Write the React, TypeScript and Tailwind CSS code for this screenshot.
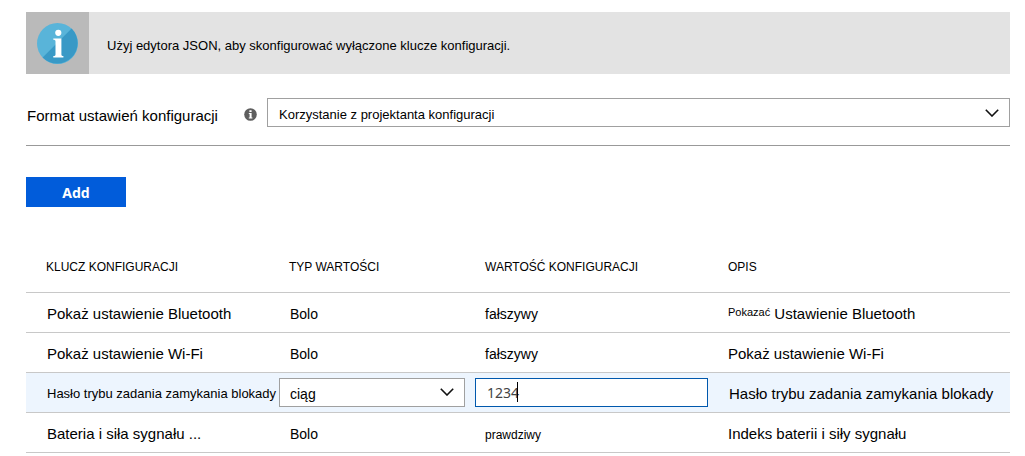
import { useState } from "react";
import type { ReactNode } from "react";

type Row = {
  key: string;
  type: string;
  value: string;
  description: ReactNode;
  editing?: boolean;
  small?: boolean;
};

const rows: Row[] = [
  {
    key: "Pokaż ustawienie Bluetooth",
    type: "Bolo",
    value: "fałszywy",
    description: (
      <>
        <span className="align-[3px] text-[11px]">Pokazać</span> Ustawienie Bluetooth
      </>
    ),
  },
  { key: "Pokaż ustawienie Wi-Fi", type: "Bolo", value: "fałszywy", description: "Pokaż ustawienie Wi-Fi" },
  {
    key: "Hasło trybu zadania zamykania blokady",
    type: "ciąg",
    value: "1234",
    description: "Hasło trybu zadania zamykania blokady",
    editing: true,
  },
  {
    key: "Bateria i siła sygnału ...",
    type: "Bolo",
    value: "prawdziwy",
    description: "Indeks baterii i siły sygnału",
    small: true,
  },
];

function Chevron() {
  return (
    <svg
      viewBox="0 0 14 8"
      className="pointer-events-none absolute top-1/2 right-[11px] h-2 w-[14px] -translate-y-1/2"
      fill="none"
      stroke="#111"
      strokeWidth="1.6"
      aria-hidden="true"
    >
      <path d="M0.8 0.8 L7 7 L13.2 0.8" />
    </svg>
  );
}

function InfoBadge() {
  return (
    <svg viewBox="0 0 41 41" className="h-[41px] w-[41px]" aria-hidden="true">
      <circle cx="20.5" cy="20.5" r="20.5" fill="#59b4d9" />
      <path d="M34.6 5.6 A20.5 20.5 0 1 1 5.6 34.6 Z" fill="#3999c6" />
      <circle cx="21.3" cy="9.8" r="3.1" fill="#fff" />
      <path
        d="M16.3 15.6 H24.4 V31.6 C24.4 32.8 25.2 33 26.4 33.1 V34.4 H16.3 V33.1 C17.8 33 18.5 32.8 18.5 31.6 V18.4 C18.5 17.2 17.8 16.9 16.3 16.8 Z"
        fill="#fff"
      />
    </svg>
  );
}

function InfoDot() {
  return (
    <svg viewBox="0 0 13 13" className="mt-1 h-[13px] w-[13px] shrink-0" aria-hidden="true">
      <circle cx="6.5" cy="6.5" r="6.3" fill="#5e5e5e" />
      <path d="M5.4 2.3 H7.6 V4.1 H5.4 Z M4.8 5.1 H7.6 V9.4 H8.4 V10.4 H4.8 V9.4 H5.6 V6.1 H4.8 Z" fill="#fff" />
    </svg>
  );
}

export default function App() {
  const [password, setPassword] = useState("1234");

  return (
    <main className="bg-white pt-3 pr-[15px] pl-[26px] font-['Liberation_Sans',Arial,sans-serif] text-black">
      <div className="flex bg-[#e3e3e3]">
        <div className="flex h-[62px] w-[63px] shrink-0 items-center justify-center bg-[#bababa]">
          <InfoBadge />
        </div>
        <p className="self-center pt-1.5 pl-[18px] text-[13px] leading-5">
          Użyj edytora JSON, aby skonfigurować wyłączone klucze konfiguracji.
        </p>
      </div>

      <div className="mt-6 flex items-center border-b border-[#999] pb-[18px]">
        <label htmlFor="format" className="w-[218px] shrink-0 pt-1.5 pl-px text-[15px] leading-5">
          Format ustawień konfiguracji
        </label>
        <InfoDot />
        <div className="relative ml-[10px] flex-1">
          <select
            id="format"
            className="block h-[29px] w-full appearance-none rounded-none border border-[#a0a0a0] bg-white px-[11px] pt-1 text-[13px]"
          >
            <option>Korzystanie z projektanta konfiguracji</option>
          </select>
          <Chevron />
        </div>
      </div>

      <button
        type="button"
        className="mt-[31px] h-[30px] w-[100px] bg-[#015cda] pt-0.5 font-['Noto_Sans',sans-serif] text-sm font-bold text-white"
      >
        Add
      </button>

      <table className="mt-9 w-full table-fixed border-collapse text-left">
        <colgroup>
          <col className="w-[253px]" />
          <col className="w-[196px]" />
          <col className="w-[243px]" />
          <col />
        </colgroup>
        <thead>
          <tr className="h-[49px] border-b border-[#c8c8c8] text-[12px]">
            <th className="pl-5 font-normal">KLUCZ KONFIGURACJI</th>
            <th className="pl-[10px] font-normal">TYP WARTOŚCI</th>
            <th className="pl-[10px] font-normal">WARTOŚĆ KONFIGURACJI</th>
            <th className="pl-[10px] font-normal">OPIS</th>
          </tr>
        </thead>
        <tbody>
          {rows.map((row) =>
            row.editing ? (
              <tr key={row.key} className="h-10 border-b border-[#c8c8c8] bg-[#edf5fe]">
                <td className="pt-1 pl-[21px] text-[13px] whitespace-nowrap">{row.key}</td>
                <td className="pr-[10px]">
                  <div className="relative">
                    <select
                      aria-label="Typ wartości"
                      className="block h-[29px] w-full appearance-none rounded-none border border-[#a0a0a0] bg-white px-[10px] pt-1 text-[14px]"
                    >
                      <option>{row.type}</option>
                    </select>
                    <Chevron />
                  </div>
                </td>
                <td className="pr-[10px]">
                  <div className="relative">
                    <input
                      type="text"
                      aria-label="Wartość konfiguracji"
                      value={password}
                      onChange={(e) => setPassword(e.target.value)}
                      className="block h-[29px] w-full border border-[#0058ad] bg-white px-[11px] font-['Noto_Sans',sans-serif] text-[14px] text-[#444] caret-transparent outline-none"
                    />
                    <span className="absolute top-1 left-[42px] h-5 w-px bg-black" />
                  </div>
                </td>
                <td className="pt-1 pl-[11px] text-[15px]">{row.description}</td>
              </tr>
            ) : (
              <tr key={row.key} className="h-10 border-b border-[#c8c8c8]">
                <td className="pt-1 pl-[21px] text-[15px]">{row.key}</td>
                <td className="pt-1 pl-[11px] text-[14px]">{row.type}</td>
                <td className={row.small ? "pt-1.5 pl-[10px] text-[12px]" : "pt-1 pl-[10px] text-[14px]"}>
                  {row.value}
                </td>
                <td className="pt-1 pl-[10px] text-[15px]">{row.description}</td>
              </tr>
            ),
          )}
        </tbody>
      </table>
    </main>
  );
}
